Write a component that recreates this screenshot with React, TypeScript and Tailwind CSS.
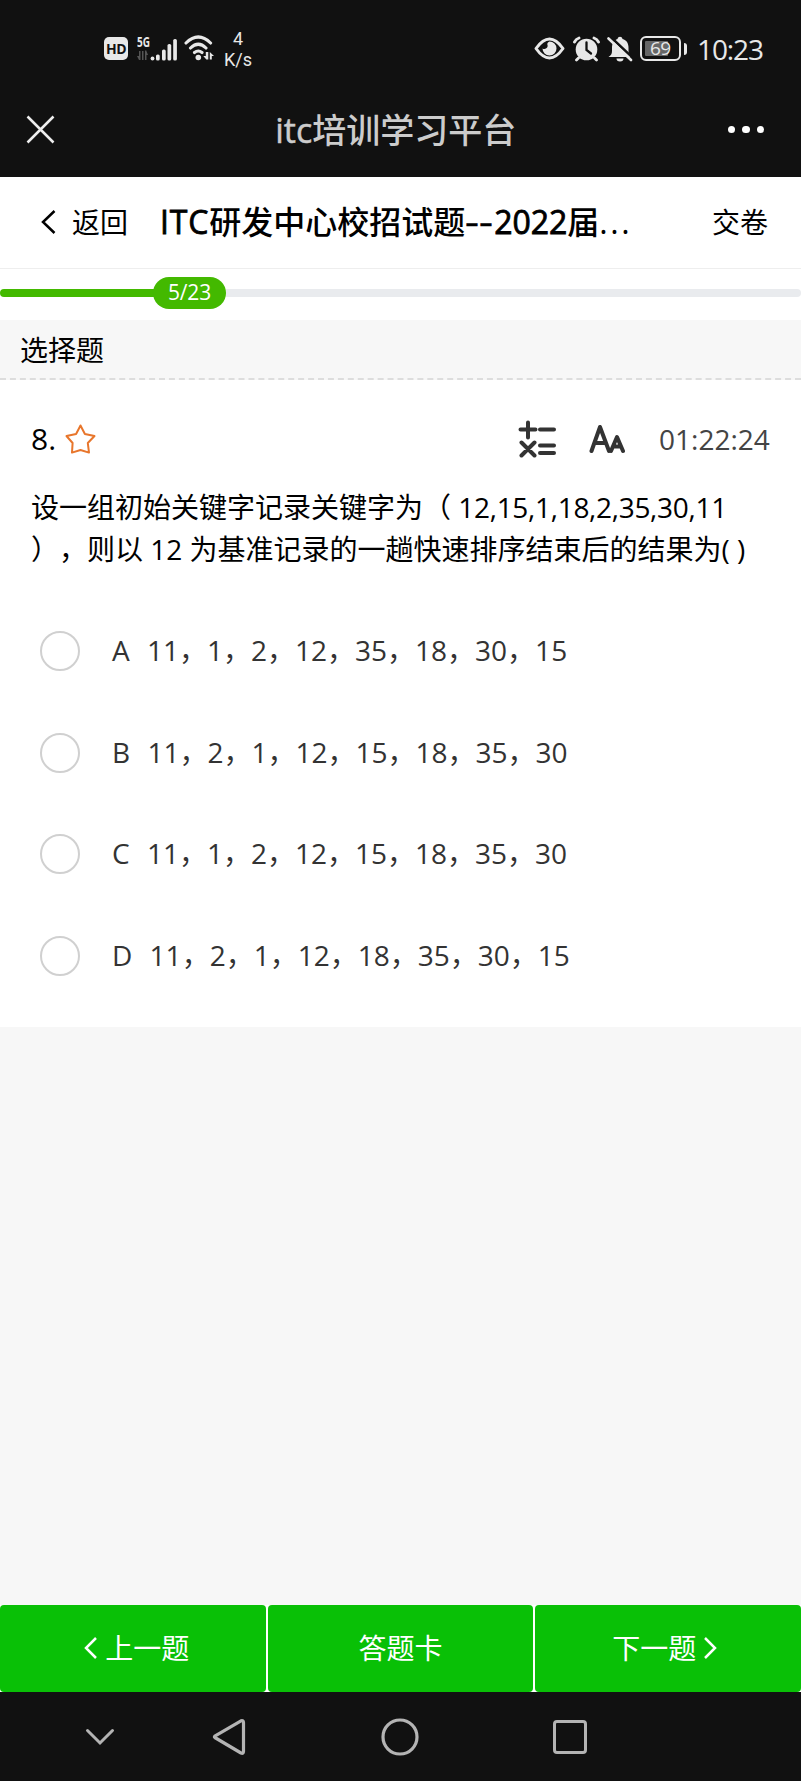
import React from "react";

interface IOption {
  label: string;
  text: string;
}

const options: IOption[] = [
  { label: "A", text: "11，1，2，12，35，18，30，15" },
  { label: "B", text: "11，2，1，12，15，18，35，30" },
  { label: "C", text: "11，1，2，12，15，18，35，30" },
  { label: "D", text: "11，2，1，12，18，35，30，15" },
];

const StatusBar: React.FC = () => {
  return (
    <div className="flex h-[97px] items-start pt-8 pl-[104px] text-[#e8e8e8]">
      <div className="mt-[5px] flex h-[23px] w-6 items-center justify-center rounded-[5px] bg-[#e8e8e8] text-[14px] font-bold tracking-[-0.5px] text-[#111]">
        HD
      </div>
      <svg className="ml-[9px]" width="40" height="30" viewBox="0 0 40 30" fill="currentColor">
        <text x="0" y="14.5" fontSize="14" fontWeight="700" textLength="13" lengthAdjust="spacingAndGlyphs">5G</text>
        <path d="M3.500 19v9H2L0 24h2v-5zM5 19v9h1.500v-9zM8 19v9h1.500v-5H11l-2-5z" fill="#555" />
        <circle cx="15.500" cy="26.500" r="1.900" />
        <rect x="19" y="22.500" width="3.700" height="6" rx="1.600" />
        <rect x="25" y="17.500" width="3.700" height="11" rx="1.600" />
        <rect x="30.500" y="12" width="3.700" height="16.500" rx="1.600" />
        <rect x="36.200" y="7" width="3.700" height="21.500" rx="1.600" />
      </svg>
      <svg className="ml-[7px]" width="31" height="30" viewBox="0 0 31 30" fill="none" stroke="currentColor" strokeWidth="3.100" strokeLinecap="round">
        <path d="M2 11Q14.300 -1 26.600 11M6.500 16Q14.300 8.500 22 16M10.500 20.500Q14.300 17.500 18 20.500" />
        <circle cx="14.300" cy="25.500" r="2.800" fill="currentColor" stroke="none" />
        <path d="M24.300 20v7.500h-2L19.300 24h2.500v-4zM25.800 20l4.200 4h-2.200v3.500h-2z" fill="currentColor" stroke="none" />
      </svg>
      <div className="-mt-1 ml-[7px] w-8 text-center font-[Roboto,sans-serif] text-[18px] leading-[21px]">
        <div>4</div>
        <div>K/s</div>
      </div>
      <svg className="mt-1 ml-[280px]" width="31" height="26" viewBox="0 0 31 26" fill="none" stroke="currentColor" strokeWidth="3">
        <path d="M2 12.500Q15.500 -6.500 29 12.500Q15.500 31.500 2 12.500Z" strokeLinejoin="round" />
        <path d="M15.500 5.500a7 7 0 1 1-7 7c2.800 1.600 6.400-.8 4.700-4.400Q13.500 6 15.500 5.500Z" fill="currentColor" stroke="none" />
      </svg>
      <svg className="mt-1 ml-2" width="27" height="26" viewBox="0 0 27 26">
        <circle cx="13.500" cy="13.500" r="10.800" fill="currentColor" />
        <path d="M1.500 6Q3 3 6 2M21 2q3 1 4.500 4M5.500 22l-2 2M21.500 22l2 2" stroke="currentColor" strokeWidth="2.800" strokeLinecap="round" />
        <path d="M13.500 6.500v7.500l4.500 3.500" stroke="#111" strokeWidth="2.300" fill="none" strokeLinecap="round" />
      </svg>
      <svg className="mt-1 ml-[7px]" width="26" height="26" viewBox="0 0 26 26">
        <path d="M1.500 21c2.500-2 3.500-3 3.500-6v-3c0-5 2-8 5.500-9 .5-3 4.500-3 5 0 4 1 6 4 6 9v3c0 3 1 4 3 6Z" fill="currentColor" />
        <path d="M9.500 22.500h7a3.500 3 0 0 1-7 0Z" fill="currentColor" />
        <path d="M2.500 0l25 23.500" stroke="#111" strokeWidth="2.600" />
        <path d="M1.500 2.500l22.500 21.500" stroke="currentColor" strokeWidth="2.600" strokeLinecap="round" />
      </svg>
      <div className="mt-1 ml-[7px] flex items-center">
        <div className="flex h-[25px] w-[41px] items-center rounded-[6px] border-2 border-[#e8e8e8] p-[3px]">
          <div className="flex h-full w-[23px] items-center rounded-[1px] bg-[#666] pl-[5px] text-[19px] tracking-[-0.5px]">69</div>
        </div>
        <div className="ml-[3px] h-3 w-[3px] rounded-r-sm bg-[#e8e8e8]" />
      </div>
      <div className="ml-[10px] text-[28px] leading-[35px] tracking-[-1.1px]">10:23</div>
    </div>
  );
};

const AppHeader: React.FC = () => {
  return (
    <div className="flex h-20 items-center justify-between pr-[37px] pb-[15px] pl-[26px]">
      <svg width="29" height="29" viewBox="0 0 29 29" stroke="#eee" strokeWidth="2.500">
        <path d="M1.500 1.500l26 26M27.500 1.500l-26 26" />
      </svg>
      <h1 className="pl-[9px] text-[34px] leading-[40px] font-medium text-[#ccc]">
        <span className="[-webkit-text-stroke:0.5px_#ccc]">itc</span>培训学习平台
      </h1>
      <div className="flex gap-[7px]">
        <span className="h-[7.500px] w-[7.500px] rounded-full bg-white" />
        <span className="h-[7.500px] w-[7.500px] rounded-full bg-white" />
        <span className="h-[7.500px] w-[7.500px] rounded-full bg-white" />
      </div>
    </div>
  );
};

const ExamHeader: React.FC = () => {
  return (
    <div className="flex h-[92px] items-center border-b border-[#eee] pb-0.5 pl-[41px] text-[28px] text-black">
      <svg width="15" height="24" viewBox="0 0 15 24" fill="none" stroke="#000" strokeWidth="2.500">
        <path d="M13.500 1L2 12l11.500 11" />
      </svg>
      <span className="ml-[16px] w-[56px]">返回</span>
      <h2 className="ml-8 w-[552px] whitespace-nowrap text-[32px] font-medium">
        <span className="tracking-[0.8px] [-webkit-text-stroke:0.8px_#000]">ITC</span>研发中心校招试题
        <span className="inline-block w-[29px] origin-left scale-x-[1.35] [-webkit-text-stroke:0.5px_#000]">--</span>
        <span className="[-webkit-text-stroke:0.8px_#000]">2022</span>届
        <span className="tracking-[2.5px]">...</span>
      </h2>
      <span className="shrink-0 whitespace-nowrap">交卷</span>
    </div>
  );
};

const Progress: React.FC = () => {
  return (
    <div className="flex h-[51px] items-center pb-[4px]">
      <div className="h-2 w-[157px] rounded-l-full bg-[#43b900]" />
      <div className="-ml-1 flex h-8 w-[73px] items-center justify-center rounded-full bg-[#43b900] text-[21px] tracking-[-0.2px] text-white">
        5/23
      </div>
      <div className="h-2 flex-1 rounded-r-full bg-[#e9ebee]" />
    </div>
  );
};

const QuestionTools: React.FC = () => {
  return (
    <div className="flex h-10 items-center pr-[30px] pl-[31px]">
      <span className="text-[30px] leading-10 text-black">8.</span>
      <svg className="ml-[9px]" width="31" height="30" viewBox="0 0 31 30" fill="none" stroke="#e8762c" strokeWidth="2" strokeLinejoin="round">
        <path d="M15.500 1.500l4.400 8.500 9.600 2-6.700 7 1.200 9.600-8.500-2.600-8.500 2.600.6-9.600-6.100-7 9.600-2z" />
      </svg>
      <div className="flex-1" />
      <svg width="38" height="38" viewBox="0 0 38 38" stroke="#333" strokeWidth="4" strokeLinecap="round">
        <path d="M2.500 9.500h15M10 2.500v15M22 9.500h14M3.500 22.500l13 13M16.500 22.500l-13 13M22 25.500h14M22 33h14" />
      </svg>
      <svg className="ml-[33px]" width="36" height="30" viewBox="0 0 36 30" fill="none" stroke="#333" strokeLinecap="round" strokeLinejoin="round">
        <path d="M2.500 27L11 3l9 24M6 19h11" strokeWidth="4" />
        <path d="M22 27l6-14 6 14M25 22.500h6" strokeWidth="4" />
      </svg>
      <span className="ml-[34px] w-[112px] whitespace-nowrap text-[28px] text-[#444]">01:22:24</span>
    </div>
  );
};

const OptionRow: React.FC<IOption> = ({ label, text }) => {
  return (
    <div className="flex h-[101.700px] items-center pl-10">
      <span className="h-10 w-10 rounded-full border-2 border-[#d0d0d0]" />
      <span className="ml-8 pb-0.5 whitespace-pre text-[28px] text-[#333] [word-spacing:10px]">
        {label} {text}
      </span>
    </div>
  );
};

const BottomBar: React.FC = () => {
  return (
    <div className="grid h-[87px] grid-cols-3 gap-x-0.5 bg-white text-[28px] text-white">
      <button className="flex items-center justify-center rounded bg-[#09c006] pb-0.5 pl-2">
        <svg className="mr-2" width="13" height="22" viewBox="0 0 13 22" fill="none" stroke="#fff" strokeWidth="2.500">
          <path d="M12 1L2 11l10 10" />
        </svg>
        上一题
      </button>
      <button className="rounded bg-[#09c006] pb-0.5">答题卡</button>
      <button className="flex items-center justify-center rounded bg-[#09c006] pr-[7px] pb-0.5">
        下一题
        <svg className="ml-2" width="13" height="22" viewBox="0 0 13 22" fill="none" stroke="#fff" strokeWidth="2.500">
          <path d="M1 1l10 10L1 21" />
        </svg>
      </button>
    </div>
  );
};

const SystemNav: React.FC = () => {
  return (
    <div className="flex h-[89px] items-center bg-[#111] pl-[85px]">
      <svg width="30" height="18" viewBox="0 0 30 18" fill="none" stroke="#b4b4b4" strokeWidth="3" strokeLinecap="round">
        <path d="M2.500 2.500L15 15 27.500 2.500" />
      </svg>
      <svg className="ml-[97px]" width="34" height="38" viewBox="0 0 34 38" fill="none" stroke="#b4b4b4" strokeWidth="3.200" strokeLinejoin="round">
        <path d="M2.800 19.500Q2 19 2.800 18.200L29 2.800Q31.500 2 31.500 4.500v29Q31.500 36 29 35z" />
      </svg>
      <svg className="ml-[135px]" width="38" height="38" viewBox="0 0 38 38" fill="none" stroke="#b4b4b4" strokeWidth="3.200">
        <circle cx="19" cy="19" r="17" />
      </svg>
      <div className="ml-[134px] h-[34px] w-[34px] rounded-[4px] border-[3px] border-[#b4b4b4]" />
    </div>
  );
};

export default function App() {
  return (
    <div className="flex h-[1781px] w-[801px] flex-col overflow-hidden bg-[#f7f7f7] font-['Open_Sans','Noto_Sans_CJK_SC',sans-serif] [text-spacing-trim:space-all]">
      <div className="bg-[#111]">
        <StatusBar />
        <AppHeader />
      </div>
      <div className="bg-white">
        <ExamHeader />
        <Progress />
      </div>
      <div className="h-[60px] border-b-2 border-dashed border-[#ddd] pl-5 text-[28px] leading-[60px] text-black">
        选择题
      </div>
      <div className="h-[647px] bg-white pt-[39px]">
        <QuestionTools />
        <div className="pt-[27px] pl-[31px] text-[28px] leading-[42px] whitespace-pre text-black">
          <p>
            设一组初始关键字记录关键字为（ <span className="tracking-[-0.3px]">12,15,1,18,2,35,30,11</span>
          </p>
          <p>），则以 12 为基准记录的一趟快速排序结束后的结果为( )</p>
        </div>
        <div className="pt-[30px]">
          {options.map((option) => (
            <OptionRow key={option.label} {...option} />
          ))}
        </div>
      </div>
      <div className="flex-1" />
      <BottomBar />
      <SystemNav />
    </div>
  );
}
